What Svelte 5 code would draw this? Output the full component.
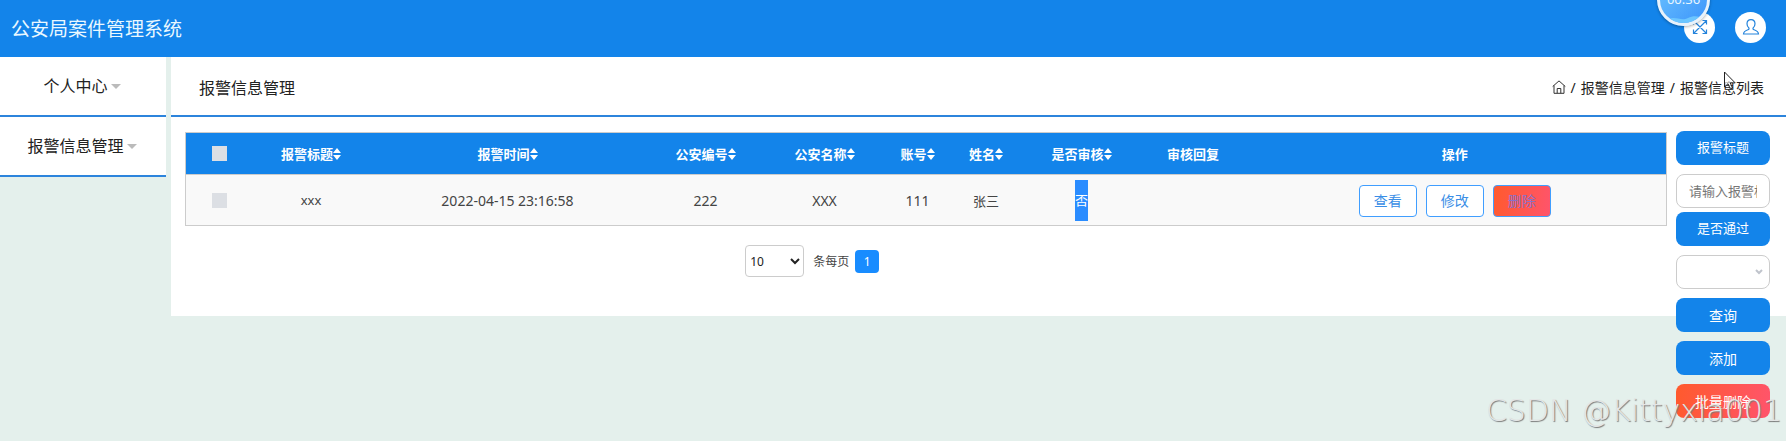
<script>
  const menu = ['个人中心', '报警信息管理'];
  const columns = [
    { label: '报警标题', width: 117, sortable: true },
    { label: '报警时间', width: 276, sortable: true },
    { label: '公安编号', width: 120, sortable: true },
    { label: '公安名称', width: 118, sortable: true },
    { label: '账号', width: 68, sortable: true },
    { label: '姓名', width: 69, sortable: true },
    { label: '是否审核', width: 122, sortable: true },
    { label: '审核回复', width: 101, sortable: false }
  ];
</script>

<header class="topbar">
  <h1>公安局案件管理系统</h1>
  <div class="tools">
    <button class="round" aria-label="全屏">
      <svg viewBox="0 0 16 16" width="16" height="16"><path d="M2 2l12 12M14 2L2 14M1.500 5.500v-4h4M10.500 1.500h4v4M14.500 10.500v4h-4M5.500 14.500h-4v-4" /></svg>
    </button>
    <button class="round" aria-label="用户">
      <svg viewBox="0 0 18 18" width="18" height="18"><path d="M9 1.700c-2.400 0-4 1.700-4 4.100 0 1.900.8 3.400 1.900 4.200.4.900-.1 1.400-1 1.700-2.300.8-4.200 1.500-4.400 4.300h15c-.2-2.800-2.100-3.500-4.400-4.300-.9-.3-1.400-.8-1-1.700C12.200 9.200 13 7.700 13 5.800c0-2.400-1.600-4.100-4-4.100z" /></svg>
    </button>
  </div>
  <div class="timer">
    <svg viewBox="0 0 48 48" width="48" height="48"><path d="M7 44c8-5 14 2 21-2 4-2 8-2 12-1v7H7z" fill="#6cc6ff" /></svg>
    <span>00:36</span>
  </div>
</header>

<div class="shell">
  <nav>
    {#each menu as item}
      <a href="#menu">{item}<i class="caret"></i></a>
    {/each}
  </nav>

  <main>
    <div class="titlebar">
      <h2>报警信息管理</h2>
      <div class="crumbs">
        <svg viewBox="0 0 14 14" width="14" height="14"><path d="M.7 6.500L7 .9l6.300 5.600M2 5.500v7.800h10V5.500M5.200 13.200V8.500h3.600v4.700" /></svg>
        <span>/</span><span>报警信息管理</span><span>/</span><span>报警信息列表</span>
      </div>
    </div>

    <div class="body">
      <div class="list">
        <table>
          <colgroup>
            <col style="width: 67px" />
            {#each columns as c}<col style="width: {c.width}px" />{/each}
            <col />
          </colgroup>
          <thead>
            <tr>
              <th><input type="checkbox" aria-label="全选" /></th>
              {#each columns as c}
                <th>{c.label}{#if c.sortable}<svg class="sort" viewBox="0 0 8 12" width="8" height="12"><path d="M4 0l4 5H0zM4 12l4-5H0z" /></svg>{/if}</th>
              {/each}
              <th>操作</th>
            </tr>
          </thead>
          <tbody>
            <tr>
              <td><input type="checkbox" aria-label="选择" /></td>
              <td>xxx</td>
              <td class="num">2022-04-15 23:16:58</td>
              <td class="num">222</td>
              <td class="num">XXX</td>
              <td class="num">111</td>
              <td>张三</td>
              <td><span class="marked">否</span></td>
              <td></td>
              <td>
                <div class="actions">
                  <button>查看</button>
                  <button>修改</button>
                  <button class="danger">删除</button>
                </div>
              </td>
            </tr>
          </tbody>
        </table>
        <div class="pager">
          <select id="size"><option>10</option></select>
          <label for="size">条每页</label>
          <button>1</button>
        </div>
      </div>

      <form class="filters">
        <label class="pill" for="title">报警标题</label>
        <input id="title" type="text" placeholder="请输入报警标题" />
        <label class="pill second" for="passed">是否通过</label>
        <div class="pick">
          <select id="passed"><option></option></select>
          <svg viewBox="0 0 8 6" width="8" height="6"><path d="M1 1l3 3 3-3" /></svg>
        </div>
        <button type="button" class="pill big">查询</button>
        <button type="button" class="pill big">添加</button>
        <button type="button" class="pill big danger">批量删除</button>
      </form>
    </div>
  </main>
</div>

<div class="watermark">CSDN @Kittyxia001</div>
<svg class="pointer" viewBox="0 0 12 19" width="12" height="19"><path d="M.5 1v15l3.500-3.300 2.400 5.400 2.200-1-2.400-5.200h5z" /></svg>

<style>
  :global(body) {
    background: #e4f0ec;
    font-family: "Noto Sans", "Noto Sans CJK SC", sans-serif;
    font-size: 13px;
    color: #444;
  }
  :global(*) { box-sizing: border-box; }
  button, input, select { font: inherit; margin: 0; }
  button { cursor: pointer; }
  h1, h2 { margin: 0; font-weight: 400; }

  .topbar {
    position: relative;
    display: flex;
    align-items: center;
    justify-content: space-between;
    height: 57px;
    padding: 0 20px 0 11px;
    background: #1384ea;
  }
  h1 { font-size: 19px; line-height: 28px; color: #eaf8ff; }
  .tools { display: flex; gap: 20px; padding-bottom: 3px; }
  .round {
    display: grid;
    place-items: center;
    width: 31px;
    height: 31px;
    padding: 0;
    border: 0;
    border-radius: 50%;
    background: #fff;
  }
  .round svg { fill: none; stroke: #2484dc; stroke-width: 1.2; }
  .timer {
    position: absolute;
    top: -27px;
    right: 76px;
    width: 53px;
    height: 53px;
    border: 3px solid #e8f2fb;
    border-radius: 50%;
    overflow: hidden;
    background: linear-gradient(135deg, #6cc4ff, #3c94fb);
    box-shadow: 0 1px 3px #0005;
    color: #e8f6ff;
    text-align: center;
    line-height: 47px;
  }
  .timer svg { position: absolute; left: 0; top: 0; }
  .timer span { position: relative; }

  .shell {
    display: flex;
    align-items: flex-start;
    gap: 5px;
    min-height: calc(100vh - 57px);
  }
  nav { flex: 0 0 166px; }
  nav a {
    display: flex;
    align-items: center;
    justify-content: center;
    gap: 3px;
    height: 60px;
    padding-right: 2px;
    border-bottom: 2px solid #2c84dc;
    background: #fff;
    color: #222;
    font-size: 16px;
    line-height: 24px;
    text-decoration: none;
  }
  .caret { border: 5px solid transparent; border-top-color: #bbb; border-bottom: 0; }

  main { flex: 1; min-width: 0; background: #fff; }
  .titlebar {
    display: flex;
    align-items: center;
    justify-content: space-between;
    height: 60px;
    padding: 2px 22px 0 28px;
    border-bottom: 2px solid #2c84dc;
    color: #222;
  }
  h2 { font-size: 16px; }
  .crumbs { display: flex; align-items: center; gap: 5px; font-size: 14px; }
  .crumbs svg { fill: none; stroke: #333; }

  .body { display: flex; gap: 9px; padding: 15px 16px 0 14px; }
  .list { flex: 1; min-width: 0; padding-bottom: 39px; }
  table {
    width: 100%;
    table-layout: fixed;
    border-collapse: collapse;
    border: 1px solid #ccc;
    text-align: center;
  }
  th, td { padding: 0; }
  th { height: 42px; padding-bottom: 1px; background: #1384ea; color: #fff; font-weight: 700; }
  td { height: 51px; background: #f9f9f9; border-top: 1px solid #ccc; }
  .num { font-size: 14px; }
  .sort { fill: #fff; vertical-align: -1px; }
  table input {
    appearance: none;
    display: block;
    width: 15px;
    height: 15px;
    margin: 0 auto;
    background: #dcdfe4;
  }
  .marked { display: inline-block; line-height: 41px; background: #2a8cff; color: #fff; }
  .actions { display: flex; justify-content: center; gap: 9px; padding-top: 2px; }
  .actions button {
    height: 32px;
    padding: 0 14px;
    border: 1px solid #409eff;
    border-radius: 4px;
    background: #fff;
    color: #3a8ee6;
    font-size: 14px;
    line-height: 28px;
  }
  .actions .danger { background: linear-gradient(100deg, #ff5a2c, #ff546c); color: #8a70c8; }

  .pager { display: flex; align-items: center; margin: 19px 0 0 559px; margin-left: 37.8%; font-size: 12px; }
  .pager select {
    width: 59px;
    height: 32px;
    padding: 0;
    border: 1px solid #ccc;
    border-radius: 4px;
    background: #fff;
    color: #222;
  }
  .pager label { margin: 0 6px 0 9px; }
  .pager button {
    width: 24px;
    height: 23px;
    padding: 0;
    border: 0;
    border-radius: 4px;
    background: #188cff;
    color: #fff;
  }

  /* The filter column hangs below the white panel instead of stretching it. */
  .filters {
    flex: 0 0 94px;
    display: flex;
    flex-direction: column;
    gap: 9px;
    height: 0;
    margin-top: -1px;
  }
  .pill, .filters input, .pick select {
    display: block;
    flex: none;
    width: 100%;
    height: 34px;
    padding: 0;
    border: 0;
    border-radius: 8px;
    line-height: 33px;
    text-align: center;
  }
  .pill { background: #1384ea; color: #fff; }
  .second { margin-top: -5px; }
  .big { font-size: 14px; }
  .pill.danger { background: linear-gradient(100deg, #ff5a2c, #ff546c); }
  .filters input {
    padding: 0 12px;
    border: 1px solid #ccc;
    background: #fff;
    text-align: left;
  }
  .filters input::placeholder { color: #777; }
  .pick { position: relative; }
  .pick select { appearance: none; border: 1px solid #ccc; background: #fff; }
  .pick svg { position: absolute; right: 7px; top: 14px; fill: none; stroke: #c0c4cc; stroke-width: 2; }

  .watermark {
    position: absolute;
    right: 4px;
    bottom: 8px;
    font-family: "DejaVu Sans", sans-serif;
    font-size: 30px;
    line-height: 44px;
    font-weight: 200;
    color: #e4e6e6;
    text-shadow: 1px 1px 1px #777;
  }
  .pointer { position: absolute; top: 71px; right: 50px; fill: #fffa; stroke: #222; }
</style>
